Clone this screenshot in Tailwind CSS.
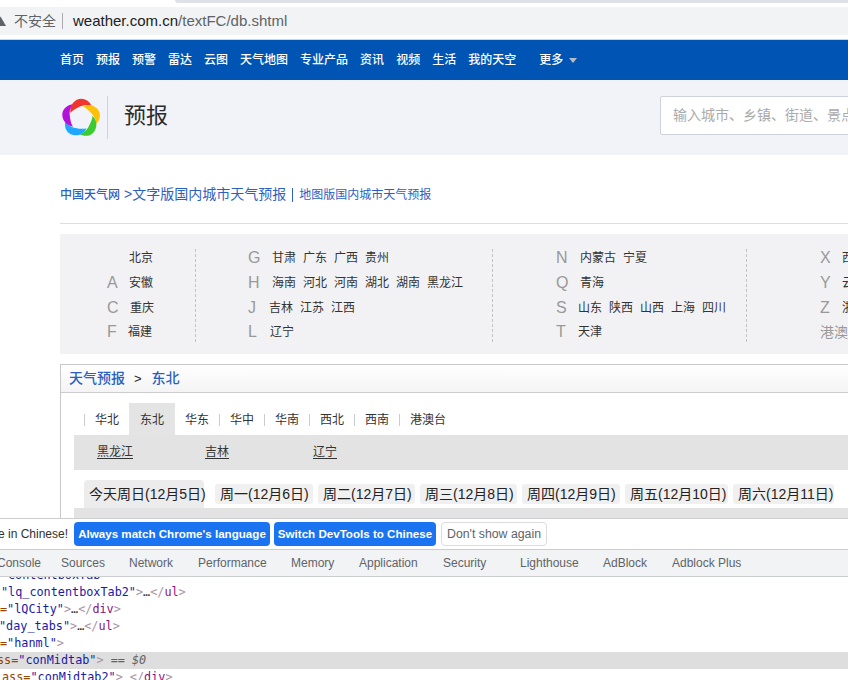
<!DOCTYPE html>
<html lang="zh"><head><meta charset="utf-8"><script src="https://cdn.jsdelivr.net/npm/@tailwindcss/browser@4"></script></head>
<body class="font-['Liberation_Sans','Noto_Sans_CJK_SC',sans-serif] bg-white">
<div class="w-[848px] h-[680px] overflow-hidden flex flex-col">
  <!-- browser chrome -->
  <div class="h-[3px] shrink-0 flex"><div class="w-[175px] bg-white"></div><div class="flex-1 bg-[#dee1e6] rounded-bl-[6px]"></div></div>
  <div class="h-[4px] shrink-0"></div>
  <div class="h-[28px] shrink-0 bg-[#f1f3f4] flex items-center overflow-hidden">
    <svg width="6" height="10" viewBox="0 0 6 10" class="shrink-0"><path d="M-5 10L0.5 0.5L6 10Z" fill="#5f6368"/></svg>
    <span class="ml-[8px] text-[14px] text-[#5f6368]">不安全</span>
    <span class="ml-[6px] w-px h-[16px] bg-[#a9abae]"></span>
    <span class="ml-[10px] text-[15px] text-[#202124]">weather.com.cn<span class="text-[#5f6368]">/textFC/db.shtml</span></span>
  </div>
  <div class="h-[4px] shrink-0"></div>
  <div class="h-px shrink-0 bg-[#c9d6ea]"></div>
  <!-- page -->
  <div class="h-[478px] shrink-0 overflow-hidden">
    <nav class="h-[40px] bg-[#0054b4] pl-[60px] flex items-center text-[12px] text-white font-medium whitespace-nowrap">
      <span class="flex gap-[12px]"><span>首页</span><span>预报</span><span>预警</span><span>雷达</span><span>云图</span><span>天气地图</span><span>专业产品</span><span>资讯</span><span>视频</span><span>生活</span><span>我的天空</span></span>
      <span class="ml-[23px]">更多</span>
      <svg width="8" height="5" viewBox="0 0 8 5" class="ml-[6px] mt-[1px]"><path d="M0 0H8L4 5Z" fill="#b4bcc8"/></svg>
    </nav>
    <header class="h-[75px] bg-[#f1f3f8] pl-[61px] flex items-center whitespace-nowrap">
      <svg width="40" height="40" viewBox="0 0 40 40" class="shrink-0">
        <path d="M9.5 15C8 7 14 .7 20.500 .7C24.500 .7 28 3 30.500 7.500C26 6.500 22 7 19 8.500C15 10.500 11.500 12 9.500 15Z" fill="#f0352f"/>
        <path d="M9.5 15C8 7 14 .7 20.500 .7C24.500 .7 28 3 30.500 7.500C26 6.500 22 7 19 8.500C15 10.500 11.500 12 9.500 15Z" fill="#ffc107" transform="rotate(72 20 20)"/>
        <path d="M9.5 15C8 7 14 .7 20.500 .7C24.500 .7 28 3 30.500 7.500C26 6.500 22 7 19 8.500C15 10.500 11.500 12 9.500 15Z" fill="#3ccb2e" transform="rotate(144 20 20)"/>
        <path d="M9.5 15C8 7 14 .7 20.500 .7C24.500 .7 28 3 30.500 7.500C26 6.500 22 7 19 8.500C15 10.500 11.500 12 9.500 15Z" fill="#1fa8ff" transform="rotate(216 20 20)"/>
        <path d="M9.5 15C8 7 14 .7 20.500 .7C24.500 .7 28 3 30.500 7.500C26 6.500 22 7 19 8.500C15 10.500 11.500 12 9.500 15Z" fill="#b312d8" transform="rotate(288 20 20)"/>
      </svg>
      <span class="ml-[6px] w-px h-[43px] shrink-0 bg-[#cfd2d6]"></span>
      <span class="ml-[16px] mb-[4px] text-[22px] leading-none text-[#2b2b2b] w-[44px] shrink-0">预报</span>
      <div class="ml-[492px] mb-[4px] h-[39px] w-[300px] shrink-0 bg-white border border-[#cdd2dc] rounded-[2px] pl-[12px] flex items-center text-[14px] text-[#aaaaaa]">输入城市、乡镇、街道、景点名称</div>
    </header>
    <main class="pl-[60px]">
      <div class="h-[69px] border-b border-[#dddddd] pt-[11px] flex items-center text-[#2b5fc2] whitespace-nowrap">
        <span class="text-[12px] font-medium">中国天气网</span>
        <span class="ml-[4px] text-[14px]">&gt;文字版国内城市天气预报</span>
        <span class="ml-[6px] w-px h-[14px] bg-[#2b5fc2]"></span>
        <span class="ml-[6px] text-[12px]">地图版国内城市天气预报</span>
      </div>
      <!-- region index -->
      <div class="mt-[10px] h-[120px] bg-[#f2f2f4] py-[15px] flex text-[12px] text-[#333333] whitespace-nowrap">
        <div class="w-[136px] shrink-0 pl-[47px] border-r border-dashed border-[#c4c4c4] h-[93px]">
          <div class="flex items-center h-[25px] -mt-[4px]"><span class="w-[22px]"></span><span>北京</span></div>
          <div class="flex items-center h-[25px]"><span class="w-[22px] text-[16px] text-[#999999]">A</span><span>安徽</span></div>
          <div class="flex items-center h-[25px]"><span class="w-[22px] text-[16px] text-[#999999]">C</span><span class="ml-[1px]">重庆</span></div>
          <div class="flex items-center h-[24px]"><span class="w-[21px] text-[16px] text-[#999999]">F</span><span>福建</span></div>
        </div>
        <div class="w-[297px] shrink-0 pl-[52px] border-r border-dashed border-[#c4c4c4] h-[93px]">
          <div class="flex items-center h-[25px] -mt-[4px]"><span class="w-[24px] text-[16px] text-[#999999]">G</span><span class="flex gap-[7px]"><span>甘肃</span><span>广东</span><span>广西</span><span>贵州</span></span></div>
          <div class="flex items-center h-[25px]"><span class="w-[24px] text-[16px] text-[#999999]">H</span><span class="flex gap-[7px]"><span>海南</span><span>河北</span><span>河南</span><span>湖北</span><span>湖南</span><span>黑龙江</span></span></div>
          <div class="flex items-center h-[25px]"><span class="w-[21px] text-[16px] text-[#999999]">J</span><span class="flex gap-[7px]"><span>吉林</span><span>江苏</span><span>江西</span></span></div>
          <div class="flex items-center h-[24px]"><span class="w-[22px] text-[16px] text-[#999999]">L</span><span>辽宁</span></div>
        </div>
        <div class="w-[254px] shrink-0 pl-[63px] border-r border-dashed border-[#c4c4c4] h-[93px]">
          <div class="flex items-center h-[25px] -mt-[4px]"><span class="w-[24px] text-[16px] text-[#999999]">N</span><span class="flex gap-[7px]"><span>内蒙古</span><span>宁夏</span></span></div>
          <div class="flex items-center h-[25px]"><span class="w-[24px] text-[16px] text-[#999999]">Q</span><span>青海</span></div>
          <div class="flex items-center h-[25px]"><span class="w-[22px] text-[16px] text-[#999999]">S</span><span class="flex gap-[7px]"><span>山东</span><span>陕西</span><span>山西</span><span>上海</span><span>四川</span></span></div>
          <div class="flex items-center h-[24px]"><span class="w-[22px] text-[16px] text-[#999999]">T</span><span>天津</span></div>
        </div>
        <div class="pl-[73px]">
          <div class="flex items-center h-[25px] -mt-[4px]"><span class="w-[22px] text-[16px] text-[#999999]">X</span><span>西藏</span></div>
          <div class="flex items-center h-[25px]"><span class="w-[22px] text-[16px] text-[#999999]">Y</span><span>云南</span></div>
          <div class="flex items-center h-[25px]"><span class="w-[22px] text-[16px] text-[#999999]">Z</span><span>浙江</span></div>
          <div class="flex items-center h-[24px] text-[14px] text-[#999999]">港澳台</div>
        </div>
      </div>
      <!-- forecast panel -->
      <section class="mt-[10px] h-[200px] border-l border-t border-[#c8c8c8] whitespace-nowrap">
        <div class="h-[28px] border-b border-[#cccccc] bg-linear-to-b from-white to-[#f4f4f4] pl-[8px] flex items-center text-[14px] font-medium text-[#2b5fc2]">
          <span>天气预报</span><span class="ml-[9px] mr-[10px] text-[13px] text-[#222222]">&gt;</span><span>东北</span>
        </div>
        <div class="pl-[13px]">
          <div class="pt-[10px] h-[42px] pl-[10px] flex items-end text-[12px] text-[#333333]">
            <div class="w-[45px] h-[32px] flex items-center pt-[1px]"><span class="border-l border-[#cccccc] pl-[10px] h-[12px] flex items-center">华北</span></div>
            <div class="w-[46px] h-[32px] flex items-center pt-[1px] pl-[11px] bg-[#e4e4e4]">东北</div>
            <div class="w-[44px] h-[32px] flex items-center pt-[1px]"><span class="pl-[10px] h-[12px] flex items-center">华东</span></div>
            <div class="w-[45px] h-[32px] flex items-center pt-[1px]"><span class="border-l border-[#cccccc] pl-[10px] h-[12px] flex items-center">华中</span></div>
            <div class="w-[45px] h-[32px] flex items-center pt-[1px]"><span class="border-l border-[#cccccc] pl-[10px] h-[12px] flex items-center">华南</span></div>
            <div class="w-[45px] h-[32px] flex items-center pt-[1px]"><span class="border-l border-[#cccccc] pl-[10px] h-[12px] flex items-center">西北</span></div>
            <div class="w-[45px] h-[32px] flex items-center pt-[1px]"><span class="border-l border-[#cccccc] pl-[10px] h-[12px] flex items-center">西南</span></div>
            <div class="flex items-center h-[32px] pt-[1px]"><span class="border-l border-[#cccccc] pl-[10px] h-[12px] flex items-center">港澳台</span></div>
          </div>
          <div class="h-[35px] bg-[#e3e3e3] pl-[23px] pb-[1px] flex items-center text-[12px] text-[#333333] underline underline-offset-2">
            <span class="w-[108px]">黑龙江</span><span class="w-[108px]">吉林</span><span>辽宁</span>
          </div>
          <div class="pt-[10px] pl-[10px] flex items-end text-[14px] text-[#222222] h-[38px]">
            <span class="w-[120px] h-[28px] pl-[5px] flex items-center bg-[#ececec] rounded-t-[4px]">今天周日(12月5日)</span>
            <span class="ml-[11px] w-[98px] h-[20px] mb-[4px] pl-[5px] flex items-center bg-[#f0f0f0] rounded-[3px]">周一(12月6日)</span>
            <span class="ml-[5px] w-[97px] h-[20px] mb-[4px] pl-[5px] flex items-center bg-[#f0f0f0] rounded-[3px]">周二(12月7日)</span>
            <span class="ml-[5px] w-[97px] h-[20px] mb-[4px] pl-[5px] flex items-center bg-[#f0f0f0] rounded-[3px]">周三(12月8日)</span>
            <span class="ml-[5px] w-[98px] h-[20px] mb-[4px] pl-[5px] flex items-center bg-[#f0f0f0] rounded-[3px]">周四(12月9日)</span>
            <span class="ml-[5px] w-[103px] h-[20px] mb-[4px] pl-[5px] flex items-center bg-[#f0f0f0] rounded-[3px]">周五(12月10日)</span>
            <span class="ml-[5px] w-[101px] h-[20px] mb-[4px] pl-[5px] flex items-center bg-[#f0f0f0] rounded-[3px]">周六(12月11日)</span>
          </div>
          <div class="h-[10px] bg-[#e3e3e3]"></div>
        </div>
      </section>
    </main>
  </div>
  <!-- devtools -->
  <div class="h-[162px] shrink-0 border-t border-[#cbcdd1] flex flex-col whitespace-nowrap">
    <div class="h-[30px] shrink-0 flex items-center text-[12px] overflow-hidden">
      <span class="-ml-[2px] w-[70px] text-[#303030] shrink-0">e in Chinese!</span>
      <span class="ml-[6px] w-[196px] h-[24px] shrink-0 flex items-center justify-center rounded-[4px] bg-[#1a73f0] text-[11.6px] text-white font-bold">Always match Chrome's language</span>
      <span class="ml-[4px] w-[162px] h-[24px] shrink-0 flex items-center justify-center rounded-[4px] bg-[#1a73f0] text-[11.6px] text-white font-bold">Switch DevTools to Chinese</span>
      <span class="ml-[5px] w-[106px] h-[24px] shrink-0 flex items-center justify-center rounded-[4px] border border-[#dadce0] text-[12.3px] text-[#5f6368]">Don't show again</span>
    </div>
    <div class="h-[28px] shrink-0 bg-[#f1f3f4] border-y border-[#cbcdd1] flex items-center text-[12px] text-[#5f6368] relative z-10">
      <span class="-ml-[3px] w-[64px] shrink-0">Console</span><span class="w-[68px] shrink-0">Sources</span><span class="w-[69px] shrink-0">Network</span><span class="w-[93px] shrink-0">Performance</span><span class="w-[68px] shrink-0">Memory</span><span class="w-[84px] shrink-0">Application</span><span class="w-[77px] shrink-0">Security</span><span class="w-[83px] shrink-0">Lighthouse</span><span class="w-[69px] shrink-0">AdBlock</span><span>Adblock Plus</span>
    </div>
    <pre class="flex-1 overflow-hidden font-['DejaVu_Sans_Mono',monospace] text-[11.8px] leading-[17px] text-[#1a1aa6]"><div class="-mt-[10px] h-[17px] pl-[8px]">contentboxTab</div><div class="h-[17px] pl-[1px]">"lq_contentboxTab2"<span class="text-[#a894a6]">&gt;</span><span class="text-[#333333]">…</span><span class="text-[#a894a6]">&lt;/</span><span class="text-[#881280]">ul</span><span class="text-[#a894a6]">&gt;</span></div><div class="h-[17px]"><span class="text-[#994500]">=</span>"lQCity"<span class="text-[#a894a6]">&gt;</span><span class="text-[#333333]">…</span><span class="text-[#a894a6]">&lt;/</span><span class="text-[#881280]">div</span><span class="text-[#a894a6]">&gt;</span></div><div class="h-[17px] -ml-[1px]">"day_tabs"<span class="text-[#a894a6]">&gt;</span><span class="text-[#333333]">…</span><span class="text-[#a894a6]">&lt;/</span><span class="text-[#881280]">ul</span><span class="text-[#a894a6]">&gt;</span></div><div class="h-[17px]"><span class="text-[#994500]">=</span>"hanml"<span class="text-[#a894a6]">&gt;</span></div><div class="h-[17px] bg-[#dedede] -ml-[3px]"><span class="text-[#994500]">ss=</span>"conMidtab"<span class="text-[#a894a6]">&gt;</span> <span class="text-[#5f6368]">== <i>$0</i></span></div><div class="h-[17px] ml-[2px]"><span class="text-[#994500]">ass=</span>"conMidtab2"<span class="text-[#a894a6]">&gt; &lt;/</span><span class="text-[#881280]">div</span><span class="text-[#a894a6]">&gt;</span></div></pre>
  </div>
</div>
</body></html>
